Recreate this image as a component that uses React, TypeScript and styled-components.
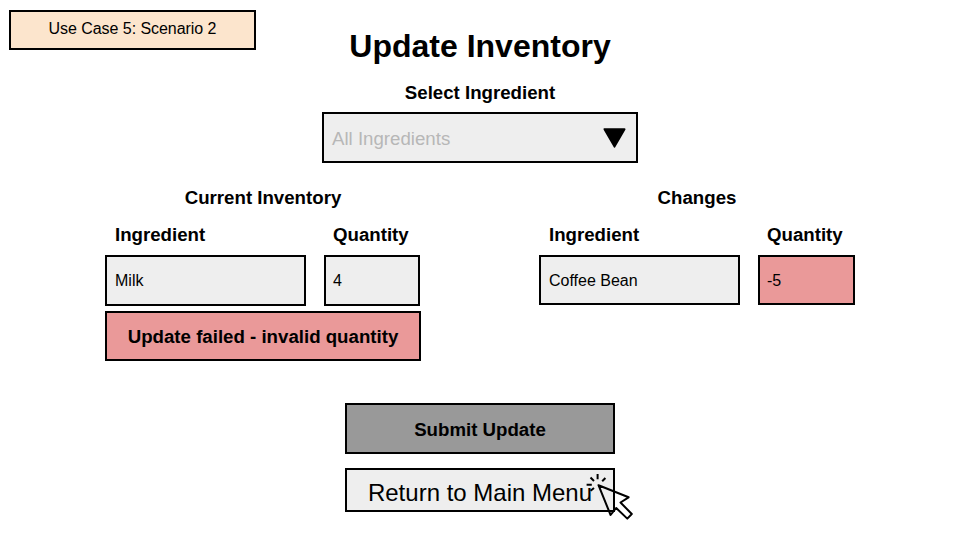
import React from 'react';
import styled, { createGlobalStyle } from 'styled-components';

const GlobalStyle = createGlobalStyle`
  *, *::before, *::after { box-sizing: border-box; }
  body {
    margin: 0;
    background: #fff;
    color: #000;
    font-family: "Liberation Sans", Arial, sans-serif;
  }
  button { font-family: inherit; color: inherit; padding: 0; margin: 0; border-radius: 0; }
`;

const colors = {
  plain: '#eeeeee',
  error: '#ea9999',
  disabled: '#999999',
  note: '#fce5cd',
};

const Page = styled.main`
  position: relative;
  width: 960px;
  height: 540px;
  overflow: hidden;
  display: flex;
  flex-direction: column;
  align-items: center;
  padding-top: 26px;
`;

const ScenarioBadge = styled.div`
  position: absolute;
  left: 9px;
  top: 10px;
  width: 247px;
  height: 40px;
  display: flex;
  align-items: center;
  justify-content: center;
  padding-bottom: 2px;
  border: 2px solid #000;
  background: ${colors.note};
  font-size: 16px;
  letter-spacing: -0.05px;
`;

const Title = styled.h1`
  margin: 0;
  font-size: 32px;
  line-height: 40px;
`;

const SectionLabel = styled.h2`
  margin: 0;
  font-size: 18.67px;
  line-height: 22px;
  text-align: center;
`;

const Picker = styled.section`
  display: flex;
  flex-direction: column;
  align-items: center;
  gap: 8px;
  margin-top: 16px;
`;

const Select = styled.button`
  width: 316px;
  height: 51px;
  display: flex;
  align-items: center;
  justify-content: space-between;
  padding: 2px 10px 0 8px;
  border: 2px solid #000;
  background: ${colors.plain};
  color: #b7b7b7;
  font-size: 18.67px;
`;

const Caret = styled.svg`
  display: block;
  width: 23px;
  height: 20px;
  margin-bottom: 2px;
`;

const Panels = styled.div`
  width: 100%;
  display: flex;
  justify-content: space-between;
  padding: 0 105px;
  margin-top: 24px;
`;

const Panel = styled.section`
  width: 316px;
`;

const Columns = styled.div`
  display: grid;
  grid-template-columns: 201px 97px;
  column-gap: 18px;
  margin-top: 15px;
`;

const ColumnLabel = styled.div`
  height: 22px;
  padding-left: 10px;
  font-size: 18.67px;
  line-height: 22px;
  font-weight: bold;

  & + & {
    padding-left: 9px;
  }
`;

const Field = styled.div<{ $invalid?: boolean; $tall?: boolean; $narrow?: boolean }>`
  width: ${(p) => (p.$narrow ? '96px' : '100%')};
  height: ${(p) => (p.$tall ? 51 : 50)}px;
  margin-top: 9px;
  padding-left: 8px;
  border: 2px solid #000;
  background: ${(p) => (p.$invalid ? colors.error : colors.plain)};
  font-size: 16px;
  line-height: 48px;

  & + & {
    padding-left: 7px;
  }
`;

const Alert = styled.div`
  width: 316px;
  height: 50px;
  margin-top: 5px;
  border: 2px solid #000;
  background: ${colors.error};
  font-size: 18.67px;
  font-weight: bold;
  line-height: 48px;
  text-align: center;
`;

const Actions = styled.div`
  position: relative;
  width: 270px;
  margin-top: 42px;
  display: flex;
  flex-direction: column;
  gap: 14px;
`;

const SubmitButton = styled.button`
  height: 51px;
  padding-top: 2px;
  border: 2px solid #000;
  background: ${colors.disabled};
  font-size: 18.67px;
  font-weight: bold;
`;

const ReturnButton = styled.button`
  height: 44px;
  padding-top: 5px;
  border: 2px solid #000;
  background: ${colors.plain};
  font-size: 24px;
`;

const Pointer = styled.svg`
  position: absolute;
  left: 240px;
  top: 69px;
  width: 50px;
  height: 50px;
`;

export default function App() {
  return (
    <>
      <GlobalStyle />
      <Page>
        <ScenarioBadge>Use Case 5: Scenario 2</ScenarioBadge>
        <Title>Update Inventory</Title>
        <Picker>
          <SectionLabel>Select Ingredient</SectionLabel>
          <Select type="button">
            All Ingredients
            <Caret viewBox="0 0 23 20">
              <path d="M1.5 1.2H21.5L11.5 18.6Z" fill="#000" stroke="#000" strokeWidth="2" strokeLinejoin="round" />
            </Caret>
          </Select>
        </Picker>
        <Panels>
          <Panel>
            <SectionLabel>Current Inventory</SectionLabel>
            <Columns>
              <ColumnLabel>Ingredient</ColumnLabel>
              <ColumnLabel>Quantity</ColumnLabel>
              <Field $tall>Milk</Field>
              <Field $tall $narrow>4</Field>
            </Columns>
            <Alert role="alert">Update failed - invalid quantity</Alert>
          </Panel>
          <Panel>
            <SectionLabel>Changes</SectionLabel>
            <Columns>
              <ColumnLabel>Ingredient</ColumnLabel>
              <ColumnLabel>Quantity</ColumnLabel>
              <Field>Coffee Bean</Field>
              <Field $invalid>-5</Field>
            </Columns>
          </Panel>
        </Panels>
        <Actions>
          <SubmitButton type="button">Submit Update</SubmitButton>
          <ReturnButton type="button">Return to Main Menu</ReturnButton>
          <Pointer viewBox="0 0 50 50" fill="none" stroke="#000" strokeWidth="2">
            <path d="M13.5 13.2L43.6 25.3L35.5 30.5L46.8 42L42.3 46.6L31.2 36L25.6 43Z" strokeLinejoin="round" />
            <path d="M12.6 7.3V2M9 9L5.5 5.5M17.2 9.2L20.4 6M6.8 12.7H1.6M9 16L5.6 18.8" />
          </Pointer>
        </Actions>
      </Page>
    </>
  );
}
